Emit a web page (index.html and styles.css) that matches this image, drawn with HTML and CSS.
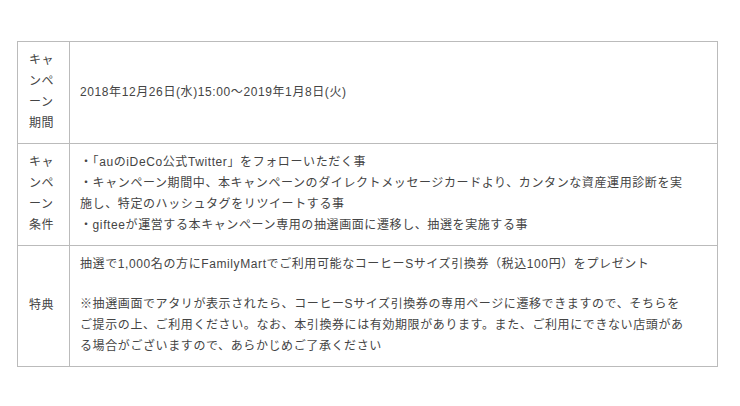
FILE: index.html
```html
<!DOCTYPE html>
<html lang="ja">
<head>
<meta charset="utf-8">
<link rel="stylesheet" href="styles.css">
</head>
<body>
<div class="page">
  <table class="info">
    <tr>
      <th class="label">キャンペーン期間</th>
      <td class="content">2018年12月26日(水)15:00～2019年1月8日(火)</td>
    </tr>
    <tr>
      <th class="label">キャンペーン条件</th>
      <td class="content">・「auのiDeCo公式Twitter」をフォローいただく事<br>・キャンペーン期間中、本キャンペーンのダイレクトメッセージカードより、カンタンな資産運用診断を実施し、特定のハッシュタグをリツイートする事<br>・gifteeが運営する本キャンペーン専用の抽選画面に遷移し、抽選を実施する事</td>
    </tr>
    <tr>
      <th class="label">特典</th>
      <td class="content">
        <p class="para">抽選で1,000名の方にFamilyMartでご利用可能なコーヒーSサイズ引換券（税込100円）をプレゼント</p>
        <p class="para">※抽選画面でアタリが表示されたら、コーヒーSサイズ引換券の専用ページに遷移できますので、そちらをご提示の上、ご利用ください。なお、本引換券には有効期限があります。また、ご利用にできない店頭がある場合がございますので、あらかじめご了承ください</p>
      </td>
    </tr>
  </table>
</div>
</body>
</html>
```
FILE: styles.css
```css
html, body {
  margin: 0;
  padding: 0;
  background: #fff;
}
.page {
  padding: 41px 0 0 17px;
}
.info {
  width: 701px;
  border-collapse: collapse;
  font-family: "Liberation Sans", "Noto Sans CJK JP", sans-serif;
  font-size: 12px;
  letter-spacing: 0.6px;
  line-height: 21px;
  color: #444;
}
.info th,
.info td {
  border: 1px solid #bbb;
  vertical-align: middle;
  text-align: left;
  font-weight: normal;
}
.label {
  width: 29px;
  padding: 8px 11px 9px 11px;
}
.content {
  padding: 8px 26px 9px 10px;
}
.para {
  margin: 0;
}
.para + .para {
  margin-top: 19px;
}
```
